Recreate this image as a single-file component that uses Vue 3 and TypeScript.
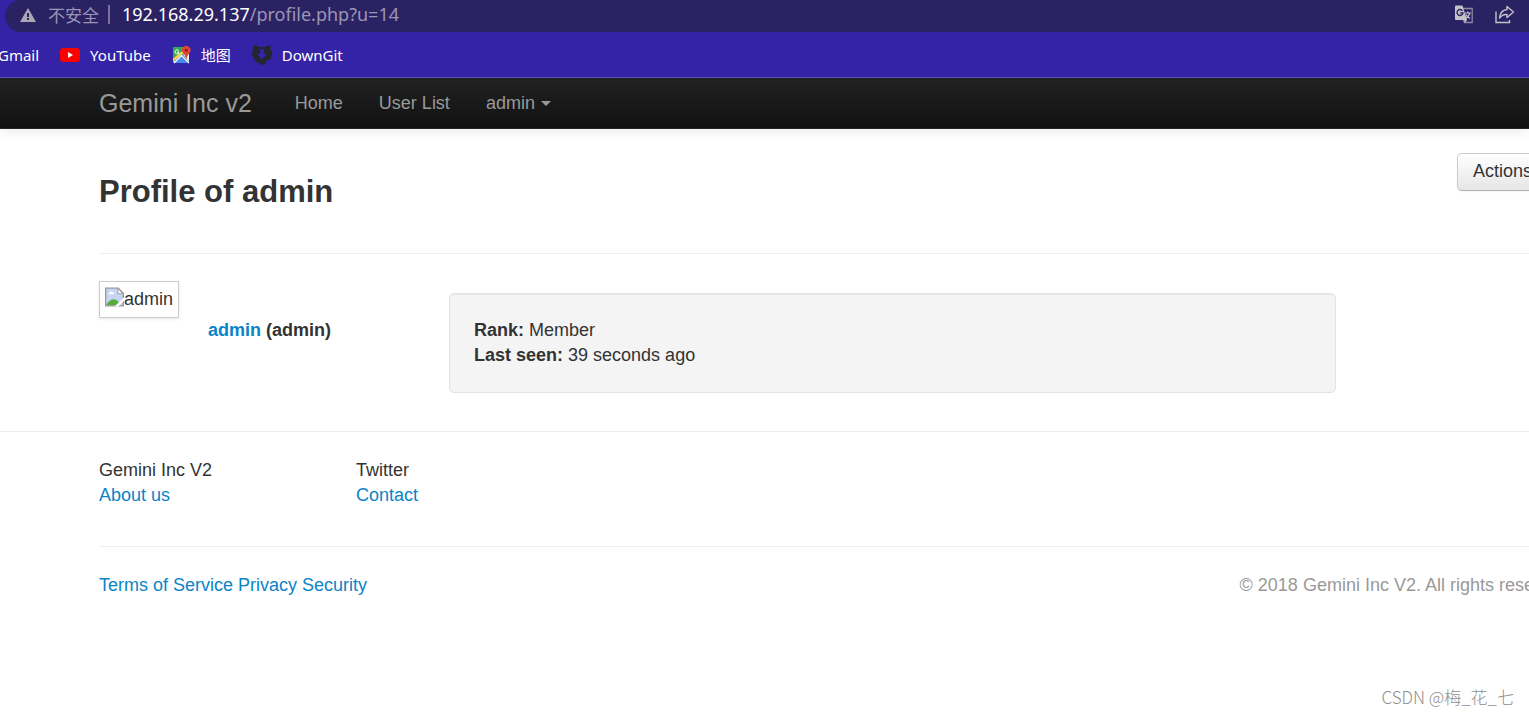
<script setup lang="ts">
interface LinkItem {
  label: string
  href: string
}

const navLinks: LinkItem[] = [
  { label: 'Home', href: '#home' },
  { label: 'User List', href: '#users' },
]

const legalLinks: LinkItem[] = [
  { label: 'Terms of Service', href: '#terms' },
  { label: 'Privacy', href: '#privacy' },
  { label: 'Security', href: '#security' },
]
</script>

<template>
  <div class="window">
    <div class="chrome">
      <div class="omnibox">
        <svg class="warn" viewBox="0 0 16 14" aria-hidden="true">
          <path d="M8 0 L16 14 H0 Z" fill="#aaa8b4" />
          <path d="M7 5h2v4H7zM7 10h2v2H7z" fill="#2b2264" />
        </svg>
        <span class="insecure">不安全</span>
        <span class="divider"></span>
        <span class="url"><b>192.168.29.137</b>/profile.php?u=14</span>
        <button class="tool" aria-label="Translate">
          <svg width="19" height="19" viewBox="0 0 19 19">
            <path d="M8 3.5h9.2v14H9.5L8 14" fill="none" stroke="#8d89a2" stroke-width="1.3" />
            <path d="M1 .5h6.5L12 15H1Q0 15 0 14V1.500Q0 .5 1 .5Z" fill="#c4c3c8" />
            <path d="M7.500 5.800A3 3 0 1 0 8 8H5.300" fill="none" stroke="#2b2264" stroke-width="1.4" />
            <path d="M9.500 8h6.500M12.700 6.500V8M14.800 8Q14 11.500 10.500 13.500M11 9.500Q12 12 15 13.500" fill="none" stroke="#c4c3c8" stroke-width="1.200" />
            <path d="M9 15h3l-2 3z" fill="#c4c3c8" />
          </svg>
        </button>
        <button class="tool" aria-label="Share">
          <svg width="20" height="19" viewBox="0 0 20 19">
            <path d="M1 6.500V17.500H14.500V15" fill="none" stroke="#c4c3c8" stroke-width="1.400" />
            <path d="M12 1.500L18.500 7L12 12.500V9.500Q7.500 9 4.500 13Q5 5.500 12 4.500Z" fill="none" stroke="#c4c3c8" stroke-width="1.400" stroke-linejoin="round" />
          </svg>
        </button>
      </div>
      <nav class="bookmarks" aria-label="Bookmarks">
        <a href="#gmail">Gmail</a>
        <a href="#youtube">
          <svg width="20" height="14" viewBox="0 0 20 14">
            <rect width="20" height="14" rx="3.500" fill="#f00" />
            <path d="M8 4l5 3-5 3z" fill="#fff" />
          </svg>
          YouTube
        </a>
        <a href="#maps">
          <svg class="map" width="19" height="20" viewBox="0 0 19 20">
            <rect x="1" y="2" width="16" height="16" rx="1" fill="#34a853" />
            <path d="M1 17L10 9l7 8v1H2z" fill="#4a89f3" />
            <path d="M1 13.500V17L14 6V3z" fill="#fbd34b" />
            <path d="M11 9.500L17 17V7z" fill="#e8eaed" />
            <path d="M2 18l7.500-7.500L17 18" fill="none" stroke="#fff" stroke-width="1.200" />
            <path d="M6.500 5.500A2 2 0 1 0 7 7H5" fill="none" stroke="#fff" />
            <path d="M14 15Q13.500 10 11 8A4.300 4.300 0 1 1 17.500 8Q14.500 11 14 15Z" fill="#e04436" />
            <circle cx="14.300" cy="5.200" r="1.500" fill="#8c1d17" />
          </svg>
          地图
        </a>
        <a href="#downgit">
          <svg width="20" height="20" viewBox="0 0 20 20">
            <path d="M2 0Q5 .5 7 2H13Q15 .5 18 0Q19 2 18.500 4Q20 6 20 9Q20 15 13.500 16V19Q10 20 7 19V17.500Q4 18 2.500 15H5Q6 16 6.500 15.500Q0 14 0 9Q0 6 1.500 4Q1 2 2 0Z" fill="#25252f" />
            <path d="M8 4h4v5h3l-5 5.500L5 9h3z" fill="#3423a6" />
          </svg>
          DownGit
        </a>
      </nav>
    </div>

    <header class="navbar">
      <div class="container nav-row">
        <a class="brand" href="#top">Gemini Inc v2</a>
        <nav class="menu" aria-label="Main">
          <a v-for="l in navLinks" :key="l.href" :href="l.href">{{ l.label }}</a>
          <button class="account" type="button">admin<span class="caret"></span></button>
        </nav>
      </div>
    </header>

    <main class="container">
      <div class="page-head">
        <h1>Profile of admin</h1>
        <button class="actions" type="button">Actions<span class="caret"></span></button>
      </div>
      <section class="profile">
        <div class="avatar">
          <svg width="20" height="20" viewBox="0 0 20 20" aria-hidden="true">
            <path d="M.7.700H14L19.300 6V19.300H.7Z" fill="#c6d5f5" stroke="#999" stroke-width="1.400" />
            <path d="M3.500 7Q4 5 5.500 5Q6.500 3 8 5Q10 5 10 7Z" fill="#fff" />
            <path d="M1.400 18.600Q4 13 9 12.500Q14 13 16 18.600Z" fill="#55ad38" />
            <path d="M13.500 1V6.500H19Z" fill="#fff" stroke="#999" />
            <path d="M10 20L20 10.500V14L14 20Z" fill="#fff" />
          </svg>
          <span>admin</span>
        </div>
        <p class="who"><a href="#admin">admin</a> (admin)</p>
        <div class="well">
          <div><b>Rank:</b> Member</div>
          <div><b>Last seen:</b> 39 seconds ago</div>
        </div>
      </section>
    </main>

    <footer>
      <div class="container">
        <div class="columns">
          <div>Gemini Inc V2<br /><a href="#about">About us</a></div>
          <div>Twitter<br /><a href="#contact">Contact</a></div>
        </div>
        <div class="legal">
          <div><template v-for="l in legalLinks" :key="l.href"><a :href="l.href">{{ l.label }}</a>{{ ' ' }}</template></div>
          <span class="copy">© 2018 Gemini Inc V2. All rights reserved</span>
        </div>
      </div>
    </footer>
    <div class="watermark">CSDN @梅_花_七</div>
  </div>
</template>

<style>
body {
  margin: 0;
  background: #fff;
}
</style>

<style scoped>
.window {
  position: relative;
  min-height: 100vh;
  overflow: hidden;
  color: #333;
  font: 18px/25px "Liberation Sans", Arial, sans-serif;
}
a {
  color: #0a84c8;
  text-decoration: none;
}
button {
  font: inherit;
  cursor: pointer;
}
.chrome {
  background: #3423a6;
  border-bottom: 1px solid #5b4fb8;
  font-family: "Noto Sans", "Noto Sans CJK SC", sans-serif;
}
.omnibox {
  display: flex;
  align-items: center;
  height: 32px;
  margin-left: 5px;
  padding: 0 14px 3px 15px;
  box-sizing: border-box;
  background: #2b2264;
  border-radius: 16px 0 0 16px;
  color: #9a96b4;
}
.warn {
  width: 16px;
  height: 14px;
  margin-right: 12px;
}
.insecure {
  font-family: "Noto Sans CJK SC", sans-serif;
  font-size: 17px;
}
.divider {
  width: 2px;
  height: 19px;
  margin: 0 12px 0 9px;
  background: #77729a;
}
.url {
  flex: 1;
}
.url b {
  color: #fff;
  font-weight: 400;
}
.tool {
  display: flex;
  margin-left: 21px;
  padding: 0;
  border: 0;
  background: none;
}
.bookmarks {
  display: flex;
  align-items: center;
  gap: 21px;
  height: 45px;
  padding-top: 1px;
  box-sizing: border-box;
  margin-left: -2px;
  font-size: 15px;
}
.bookmarks a {
  display: flex;
  align-items: center;
  gap: 10px;
  color: #fff;
}
.container {
  margin-left: 99px;
  margin-right: -32px;
}
.navbar {
  background: linear-gradient(#222, #111);
  border-bottom: 1px solid #252525;
  box-shadow: 0 1px 12px rgba(0, 0, 0, 0.1);
}
.chrome {
  position: relative;
}
.nav-row,
.menu {
  display: flex;
  align-items: center;
}
.nav-row {
  height: 50px;
}
.brand {
  color: #999;
  font-size: 25px;
}
.menu {
  gap: 36px;
  margin-left: 43px;
}
.menu a,
.account {
  color: #999;
}
.account {
  display: flex;
  align-items: center;
  padding: 0;
  border: 0;
  background: none;
}
.caret {
  margin-left: 6px;
  border: 5px solid transparent;
  border-top-color: currentColor;
  border-bottom: 0;
}
.page-head {
  display: flex;
  justify-content: space-between;
  align-items: flex-start;
  height: 100px;
  padding-top: 24px;
  border-bottom: 1px solid #eee;
}
h1 {
  margin: 14px 0 0;
  font-size: 31px;
  line-height: 50px;
}
.actions {
  display: flex;
  align-items: center;
  width: 104px;
  height: 38px;
  padding: 0 15px 2px;
  box-sizing: border-box;
  border: 1px solid #ccc;
  border-bottom-color: #b3b3b3;
  border-radius: 5px;
  background: linear-gradient(#fff, #e6e6e6);
  box-shadow: 0 1px 2px rgba(0, 0, 0, 0.05);
  color: #333;
}
.profile {
  display: flex;
  align-items: flex-start;
  padding: 27px 225px 38px 0;
}
.avatar {
  display: flex;
  align-items: flex-start;
  flex: none;
  width: 80px;
  height: 37px;
  padding: 5px;
  box-sizing: border-box;
  border: 1px solid #ccc;
  box-shadow: 0 1px 3px rgba(0, 0, 0, 0.1);
}
.who {
  flex: none;
  width: 241px;
  margin: 37px 0 0 29px;
  font-weight: 700;
}
.well {
  flex: 1;
  margin-top: 12px;
  padding: 24px;
  border: 1px solid #e3e3e3;
  border-radius: 5px;
  background: #f4f4f4;
  box-shadow: inset 0 1px 1px rgba(0, 0, 0, 0.05);
}
footer {
  border-top: 1px solid #eee;
}
.columns {
  display: flex;
  padding: 26px 0 38px;
  border-bottom: 1px solid #eee;
}
.columns div {
  width: 257px;
}
.legal {
  display: flex;
  justify-content: space-between;
  padding-top: 26px;
}
.copy {
  margin-right: -8px;
  color: #999;
}
.watermark {
  position: absolute;
  right: 15px;
  bottom: 6px;
  color: #8e8e8e;
  font-family: "Noto Sans CJK SC", sans-serif;
  font-size: 17px;
  font-weight: 300;
}
</style>
